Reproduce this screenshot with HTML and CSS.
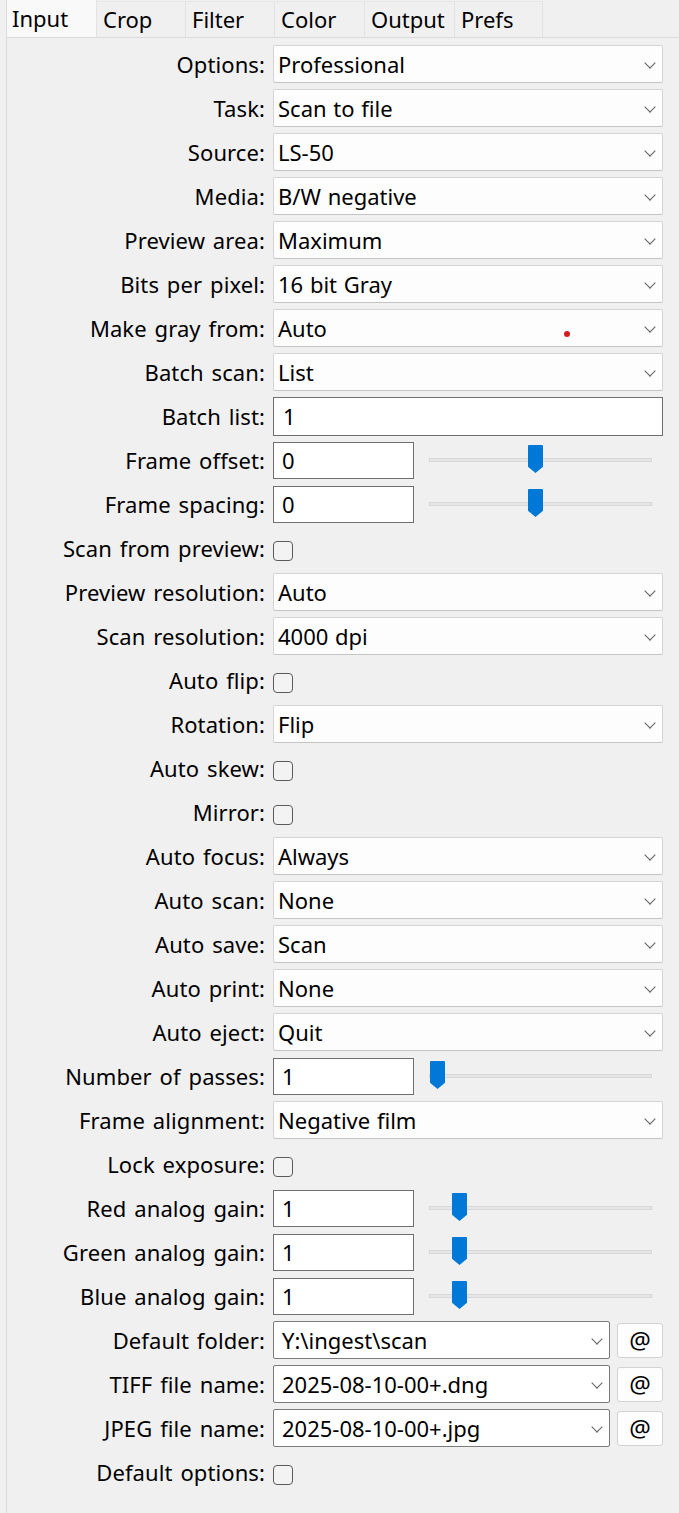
FILE: index.html
```html
<!DOCTYPE html>
<html>
<head>
<meta charset="utf-8">
<link rel="stylesheet" href="styles.css">
</head>
<body>
<div class="win">
  <div class="tabs">
    <div class="tab sel">Input</div>
    <div class="tab">Crop</div>
    <div class="tab">Filter</div>
    <div class="tab">Color</div>
    <div class="tab">Output</div>
    <div class="tab">Prefs</div>
  </div>
  <div class="panel">
    <div class="row"><label>Options:</label><div class="combo"><span>Professional</span><i class="chev"></i></div></div>
    <div class="row"><label>Task:</label><div class="combo"><span>Scan to file</span><i class="chev"></i></div></div>
    <div class="row"><label>Source:</label><div class="combo"><span>LS-50</span><i class="chev"></i></div></div>
    <div class="row"><label>Media:</label><div class="combo"><span>B/W negative</span><i class="chev"></i></div></div>
    <div class="row"><label>Preview area:</label><div class="combo"><span>Maximum</span><i class="chev"></i></div></div>
    <div class="row"><label>Bits per pixel:</label><div class="combo"><span>16 bit Gray</span><i class="chev"></i></div></div>
    <div class="row"><label>Make gray from:</label><div class="combo dotted"><span>Auto</span><i class="chev"></i><b class="reddot"></b></div></div>
    <div class="row"><label>Batch scan:</label><div class="combo"><span>List</span><i class="chev"></i></div></div>
    <div class="row"><label>Batch list:</label><div class="edit wide">1</div></div>
    <div class="row"><label>Frame offset:</label><div class="edit">0</div><div class="slider"><div class="track"></div><div class="thumb" style="left:99px"></div></div></div>
    <div class="row"><label>Frame spacing:</label><div class="edit">0</div><div class="slider"><div class="track"></div><div class="thumb" style="left:99px"></div></div></div>
    <div class="row"><label>Scan from preview:</label><div class="check"></div></div>
    <div class="row"><label>Preview resolution:</label><div class="combo"><span>Auto</span><i class="chev"></i></div></div>
    <div class="row"><label>Scan resolution:</label><div class="combo"><span>4000 dpi</span><i class="chev"></i></div></div>
    <div class="row"><label>Auto flip:</label><div class="check"></div></div>
    <div class="row"><label>Rotation:</label><div class="combo"><span>Flip</span><i class="chev"></i></div></div>
    <div class="row"><label>Auto skew:</label><div class="check"></div></div>
    <div class="row"><label>Mirror:</label><div class="check"></div></div>
    <div class="row"><label>Auto focus:</label><div class="combo"><span>Always</span><i class="chev"></i></div></div>
    <div class="row"><label>Auto scan:</label><div class="combo"><span>None</span><i class="chev"></i></div></div>
    <div class="row"><label>Auto save:</label><div class="combo"><span>Scan</span><i class="chev"></i></div></div>
    <div class="row"><label>Auto print:</label><div class="combo"><span>None</span><i class="chev"></i></div></div>
    <div class="row"><label>Auto eject:</label><div class="combo"><span>Quit</span><i class="chev"></i></div></div>
    <div class="row"><label>Number of passes:</label><div class="edit">1</div><div class="slider"><div class="track"></div><div class="thumb" style="left:1px"></div></div></div>
    <div class="row"><label>Frame alignment:</label><div class="combo"><span>Negative film</span><i class="chev"></i></div></div>
    <div class="row"><label>Lock exposure:</label><div class="check"></div></div>
    <div class="row"><label>Red analog gain:</label><div class="edit">1</div><div class="slider"><div class="track"></div><div class="thumb" style="left:23px"></div></div></div>
    <div class="row"><label>Green analog gain:</label><div class="edit">1</div><div class="slider"><div class="track"></div><div class="thumb" style="left:23px"></div></div></div>
    <div class="row"><label>Blue analog gain:</label><div class="edit">1</div><div class="slider"><div class="track"></div><div class="thumb" style="left:23px"></div></div></div>
    <div class="row"><label>Default folder:</label><div class="combo editable"><span>Y:\ingest\scan</span><i class="chev"></i></div><button class="at">@</button></div>
    <div class="row"><label>TIFF file name:</label><div class="combo editable"><span>2025-08-10-00+.dng</span><i class="chev"></i></div><button class="at">@</button></div>
    <div class="row"><label>JPEG file name:</label><div class="combo editable"><span>2025-08-10-00+.jpg</span><i class="chev"></i></div><button class="at">@</button></div>
    <div class="row"><label>Default options:</label><div class="check"></div></div>
  </div>
</div>
</body>
</html>
```
FILE: styles.css
```css
html, body { margin: 0; padding: 0; background: #f0f0f0; }
body {
  font-family: "Noto Sans", "Open Sans", sans-serif;
  font-size: 22px;
  color: #000;
  width: 679px;
  height: 1513px;
  overflow: hidden;
}
.win {
  margin-left: 6px;
  border-left: 1px solid #dcdcdc;
  height: 1513px;
}
.tabs {
  display: flex;
  height: 37px;
  align-items: flex-end;
}
.tab {
  box-sizing: border-box;
  height: 36px;
  padding: 0 0 0 6px;
  border-top: 1px solid #e6e6e6;
  border-right: 1px solid #e3e3e3;
  background: #f0f0f0;
  line-height: 34px;
  width: 89px;
}
.tab:nth-child(4) { width: 90px; }
.tab:nth-child(5) { width: 90px; }
.tab:nth-child(6) { width: 88px; }
.tab.sel {
  height: 37px;
  width: 90px;
  background: #f9f9f9;
  border-top: none;
  padding-left: 5px;
  line-height: 37px;
}
.panel {
  border-top: 1px solid #dadada;
  padding-top: 4px;
}
.row {
  display: flex;
  align-items: center;
  height: 44px;
}
.row label {
  width: 258px;
  text-align: right;
  padding-right: 8px;
  white-space: nowrap;
  flex: none;
  word-spacing: 2px;
  letter-spacing: 0.1px;
}
.combo {
  position: relative;
  box-sizing: border-box;
  width: 390px;
  height: 38px;
  background: #fdfdfd;
  border: 1px solid #d4d4d4;
  border-bottom-color: #c4c4c4;
  border-radius: 2px;
  display: flex;
  align-items: center;
  padding-left: 4px;
  word-spacing: 1px;
}
.combo.editable {
  width: 337px;
  background: #fff;
  border-color: #7a7a7a;
  padding-left: 8px;
}
.chev {
  position: absolute;
  right: 8px;
  top: 13px;
  width: 7px;
  height: 7px;
  border-right: 1px solid #606060;
  border-bottom: 1px solid #606060;
  transform: rotate(45deg);
}
.reddot {
  position: absolute;
  left: 290px;
  top: 21px;
  width: 6px;
  height: 6px;
  border-radius: 50%;
  background: #d41c1c;
}
.edit {
  box-sizing: border-box;
  width: 141px;
  height: 37px;
  background: #fff;
  border: 1px solid #6f6f6f;
  padding-left: 8px;
  display: flex;
  align-items: center;
  flex: none;
}
.edit.wide { width: 390px; height: 39px; padding-left: 9px; }
.slider {
  position: relative;
  width: 223px;
  height: 30px;
  margin-left: 15px;
}
.track {
  position: absolute;
  left: 0; right: 0;
  top: 13px;
  height: 4px;
  box-sizing: border-box;
  background: #e7e7e7;
  border: 1px solid #d6d6d6;
}
.thumb {
  position: absolute;
  top: 0;
  width: 15px;
  height: 28px;
  background: #0078d7;
  clip-path: polygon(0 0, 100% 0, 100% 78%, 50% 100%, 0 78%);
  border-radius: 1px;
}
.check {
  box-sizing: border-box;
  width: 20px;
  height: 20px;
  border: 1px solid #5a5a5a;
  border-radius: 4px;
  background: #f3f3f3;
  margin-top: 6px;
}
.at {
  box-sizing: border-box;
  margin-left: 7px;
  width: 46px;
  height: 35px;
  background: #fdfdfd;
  border: 1px solid #d3d3d3;
  border-radius: 3px;
  font-family: "Noto Sans", sans-serif;
  font-size: 24px;
  color: #000;
  padding: 0;
  line-height: 30px;
}
```
